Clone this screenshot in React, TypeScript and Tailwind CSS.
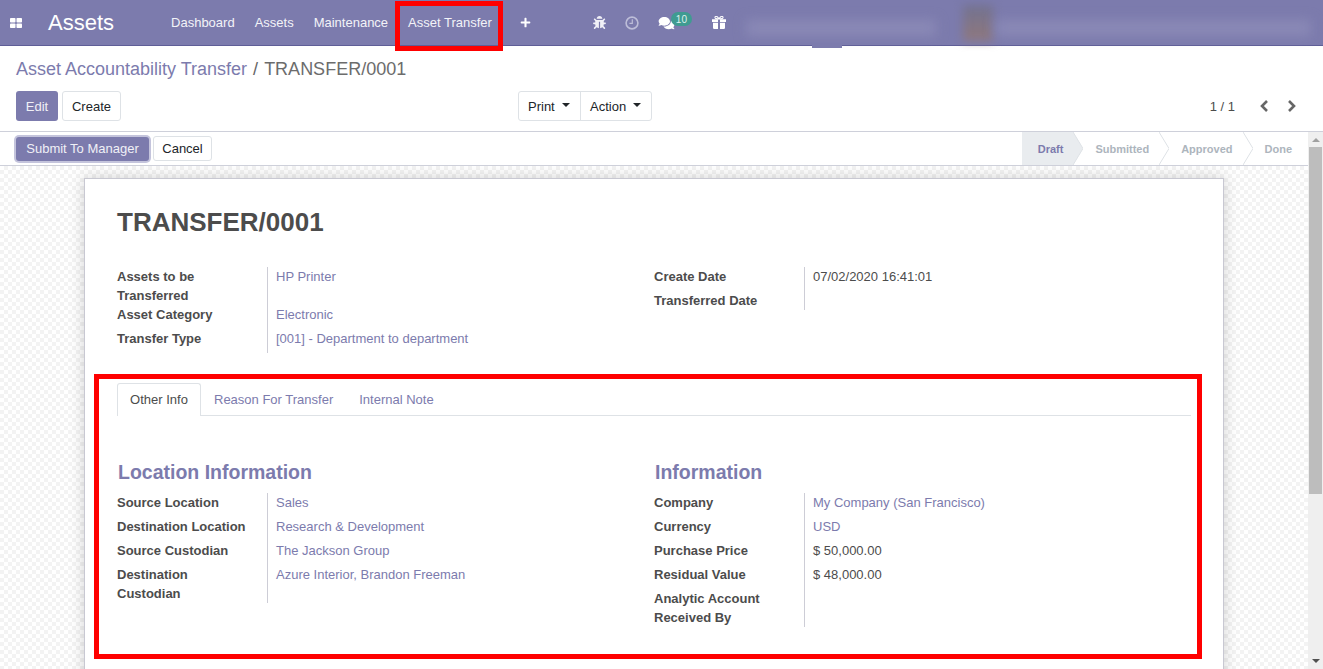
import React from "react";
import { FaBug, FaComments, FaPlus } from "react-icons/fa";

type Row = { label: string; value?: string; link?: boolean };

const Caret = () => (
  <span className="ml-[7px] mb-[4px] inline-block border-x-[4px] border-t-[4px] border-x-transparent border-t-[#212529] align-middle" />
);

function FieldGroup({ rows }: { rows: Row[] }) {
  return (
    <div className="grid grid-cols-[150px_1fr]">
      {rows.map((r) => (
        <React.Fragment key={r.label}>
          <div className="font-bold text-[#4c4c4c] leading-[19px] pr-[15px]">{r.label}</div>
          <div className={`border-l border-[#cdcdd6] pl-2 pb-[5px] leading-[19px] ${r.link ? "text-[#7c7bad]" : "text-[#4c4c4c]"}`}>
            {r.value}
          </div>
        </React.Fragment>
      ))}
    </div>
  );
}

function StatusStep({ label, active }: { label: string; active?: boolean }) {
  return (
    <div className={`flex h-[33px] items-center pt-[2px] text-[11px] font-bold ${active ? "text-[#7c7bad]" : "text-[#adb5bd]"}`}>
      {label}
    </div>
  );
}

const Chevron = ({ fill }: { fill: string }) => (
  <svg width="10" height="33" viewBox="0 0 10 33" className="shrink-0">
    <polygon points="0,0 10,16.5 0,33" fill={fill} />
    <polyline points="0,0 10,16.5 0,33" fill="none" stroke="#dee2e6" strokeWidth="1" />
  </svg>
);

const GridIcon = () => (
  <svg width="12" height="10" viewBox="0 0 12 10" className="ml-[10px] shrink-0" fill="#ffffff">
    <rect x="0" y="0" width="5.5" height="4.5" rx="0.8" />
    <rect x="6.5" y="0" width="5.5" height="4.5" rx="0.8" />
    <rect x="0" y="5.5" width="5.5" height="4.5" rx="0.8" />
    <rect x="6.5" y="5.5" width="5.5" height="4.5" rx="0.8" />
  </svg>
);

const ClockIcon = () => (
  <svg width="14" height="14" viewBox="0 0 14 14" className="ml-[19px] shrink-0" fill="none" stroke="#bdbdd8">
    <circle cx="7" cy="7" r="5.9" strokeWidth="1.6" />
    <path d="M7.3 3.2V7.4H4.4" strokeWidth="1.2" />
  </svg>
);

const GiftIcon = () => (
  <svg width="14" height="13" viewBox="0 0 14 13" className="ml-[20px] shrink-0" fill="#ffffff">
    <path d="M0 3.2H6V6H0ZM8 3.2H14V6H8ZM1 6.8H6V13H2.2Q1 13 1 11.8ZM8 6.8H13V11.8Q13 13 11.8 13H8Z" />
    <path d="M7 3C5.5 0 3.4-.4 3 1.2 2.7 2.6 4.6 3 7 3ZM7 3C8.5 0 10.6-.4 11 1.2 11.3 2.6 9.4 3 7 3Z" fill="none" stroke="#ffffff" strokeWidth="1.1" />
  </svg>
);

const Pager = ({ d, className }: { d: string; className: string }) => (
  <svg width="9" height="12" viewBox="0 0 9 12" className={className} fill="none" stroke="#666666" strokeWidth="2.6">
    <path d={d} />
  </svg>
);

export default function App() {
  return (
    <div className="relative flex h-screen flex-col overflow-hidden bg-white font-['Liberation_Sans',Arial,sans-serif] text-[13px] text-[#212529]">
      {/* Top navigation */}
      <header className="flex h-[46px] shrink-0 items-center border-b border-[#5f5e97] bg-[#7c7bad] text-white">
        <GridIcon />
        <span className="ml-[26px] text-[22px] leading-none">Assets</span>
        <nav className="ml-[47px] flex">
          {["Dashboard", "Assets", "Maintenance", "Asset Transfer"].map((n) => (
            <span key={n} className="px-[10px] text-[13px] text-[#f3f3f8]">{n}</span>
          ))}
        </nav>
        <FaPlus className="ml-[18px] h-[11px] w-[11px] shrink-0" />
        <FaBug className="ml-[62px] h-[13px] w-[13px] shrink-0 text-[#f1f1f7]" />
        <ClockIcon />
        <FaComments className="ml-[19px] h-[14px] w-[17px] shrink-0" />
        <span className="-mt-[7px] -ml-[4px] flex h-[14px] w-[21px] shrink-0 items-center justify-center rounded-full bg-[#3f9b91] text-[10px] text-[#dff1ef]">10</span>
        <GiftIcon />
        <div className="ml-[20px] mt-[10px] h-[16px] w-[190px] shrink-0 bg-[#8a89b6] blur-[6px]" />
        <div className="ml-[27px] h-[36px] w-[30px] shrink-0 bg-linear-to-b from-[#727290] to-[#90787c] blur-[5px]" />
        <div className="ml-[3px] mt-[10px] h-[16px] w-[315px] shrink-0 bg-[#8a89b6] blur-[6px]" />
      </header>

      {/* Control panel */}
      <section className="h-[86px] shrink-0 border-b border-[#ced0da] px-4">
        <div className="flex h-[45px] items-center text-[18px] leading-none">
          <span className="text-[#7c7bad]">Asset Accountability Transfer</span>
          <span className="mx-[6px] text-[#666]">/</span>
          <span className="text-[#6c6c6c]">TRANSFER/0001</span>
        </div>
        <div className="flex h-[30px] items-center">
          <button className="h-[30px] w-[42px] rounded-[3px] bg-[#7c7bad] pt-px text-[#f0f0f6]">Edit</button>
          <button className="ml-[4px] h-[30px] w-[59px] rounded-[3px] border border-[#dee2e6] bg-white pt-px">Create</button>
          <div className="ml-[397px] flex h-[30px] rounded-[3px] border border-[#dee2e6] pt-px">
            <div className="-mt-px flex w-[62px] items-center border-r border-[#dee2e6] pl-[9px] pt-px">Print<Caret /></div>
            <div className="flex w-[70px] items-center pl-[9px]">Action<Caret /></div>
          </div>
          <span className="ml-auto pt-px text-[#4c4c4c]">1 / 1</span>
          <Pager d="M7 1 2 6l5 5" className="ml-[25px] shrink-0" />
          <Pager d="M2 1l5 5-5 5" className="ml-[18px] mr-[11px] shrink-0" />
        </div>
      </section>

      <div className="flex min-h-0 flex-1">
        <main className="flex min-w-0 flex-1 flex-col">
          {/* Status bar */}
          <div className="flex h-[34px] shrink-0 items-center border-b border-[#ced0da]">
            <button className="ml-[16px] h-[24px] w-[133px] rounded-[3px] bg-[#7c7bad] text-[#f0f0f6] shadow-[0_0_0_2px_#c4c4dc]">Submit To Manager</button>
            <button className="ml-[4px] h-[25px] w-[59px] rounded-[3px] border border-[#dee2e6] bg-white">Cancel</button>
            <div className="ml-auto flex h-[33px] items-center self-start">
              <div className="bg-[#e9ecef] pl-[16px] pr-[10px]"><StatusStep label="Draft" active /></div>
              <Chevron fill="#e9ecef" />
              <div className="pl-[12px] pr-[10px]"><StatusStep label="Submitted" /></div>
              <Chevron fill="#ffffff" />
              <div className="pl-[12px] pr-[10px]"><StatusStep label="Approved" /></div>
              <Chevron fill="#ffffff" />
              <div className="pl-[12px] pr-[16px]"><StatusStep label="Done" /></div>
            </div>
          </div>

          {/* Sheet area */}
          <div className="min-h-0 flex-1 overflow-hidden bg-[repeating-conic-gradient(#f3f3f3_0_25%,#ffffff_0_50%)] bg-[length:8px_8px] pt-[12px]">
            <div className="ml-[84px] h-[600px] w-[1140px] border border-[#c8c8d2] bg-white px-[32px] shadow-[0_0_14px_rgba(0,0,0,0.18)]">
              <h1 className="mt-[28px] text-[26px] font-bold leading-[30px] text-[#4c4c4c]">TRANSFER/0001</h1>
              <div className="mt-[30px] grid grid-cols-[537px_1fr]">
                <FieldGroup
                  rows={[
                    { label: "Assets to be Transferred", value: "HP Printer", link: true },
                    { label: "Asset Category", value: "Electronic", link: true },
                    { label: "Transfer Type", value: "[001] - Department to department", link: true },
                  ]}
                />
                <div className="self-start">
                  <FieldGroup
                    rows={[
                      { label: "Create Date", value: "07/02/2020 16:41:01" },
                      { label: "Transferred Date" },
                    ]}
                  />
                </div>
              </div>

              {/* Tabs */}
              <div className="mt-[30px] flex h-[33px] border-b border-[#dee2e6]">
                <div className="flex h-[33px] w-[84px] items-center justify-center rounded-t-[3px] border border-b-0 border-[#dee2e6] bg-white text-[#4c4c4c]">Other Info</div>
                <div className="ml-[13px] flex h-[33px] items-center text-[#7c7bad]">Reason For Transfer</div>
                <div className="ml-[26px] flex h-[33px] items-center text-[#7c7bad]">Internal Note</div>
              </div>

              <div className="mt-[43px] grid grid-cols-[537px_1fr]">
                <div>
                  <h2 className="ml-px mb-[8px] text-[19.5px] font-bold leading-[26px] text-[#7c7bad]">Location Information</h2>
                  <FieldGroup
                    rows={[
                      { label: "Source Location", value: "Sales", link: true },
                      { label: "Destination Location", value: "Research & Development", link: true },
                      { label: "Source Custodian", value: "The Jackson Group", link: true },
                      { label: "Destination Custodian", value: "Azure Interior, Brandon Freeman", link: true },
                    ]}
                  />
                </div>
                <div>
                  <h2 className="ml-px mb-[8px] text-[19.5px] font-bold leading-[26px] text-[#7c7bad]">Information</h2>
                  <FieldGroup
                    rows={[
                      { label: "Company", value: "My Company (San Francisco)", link: true },
                      { label: "Currency", value: "USD", link: true },
                      { label: "Purchase Price", value: "$ 50,000.00" },
                      { label: "Residual Value", value: "$ 48,000.00" },
                      { label: "Analytic Account" },
                      { label: "Received By" },
                    ]}
                  />
                </div>
              </div>
            </div>
          </div>
        </main>

        {/* Scrollbar */}
        <aside className="flex w-[15px] shrink-0 flex-col items-center bg-[#efefef]">
          <span className="mt-[6px] border-x-[4px] border-b-[4px] border-x-transparent border-b-[#a0a0a0]" />
          <span className="mt-[5px] h-[347px] w-[13px] bg-[#bdbdbd]" />
          <span className="mt-auto mb-[6px] border-x-[4px] border-t-[4px] border-x-transparent border-t-[#505050]" />
        </aside>
      </div>

      {/* Annotation overlays */}
      <div className="absolute left-[812px] top-[44px] h-[4px] w-[30px] bg-[#7c7bad]" />
      <div className="absolute left-[395px] top-[1px] h-[50px] w-[108px] border-[5px] border-[#ff0000]" />
      <div className="absolute left-[94px] top-[374px] h-[285px] w-[1108px] border-[5px] border-[#ff0000]" />
    </div>
  );
}
